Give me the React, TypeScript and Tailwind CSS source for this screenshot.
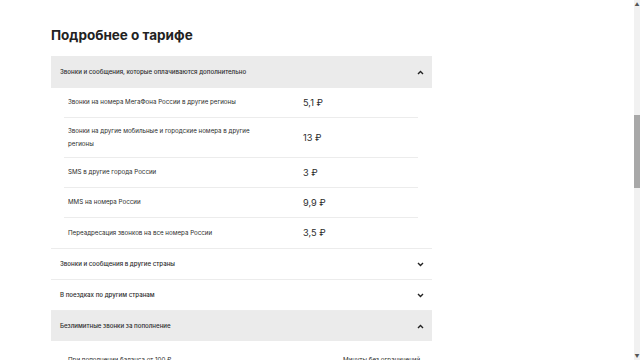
import type { ReactNode } from "react";

const FONT = { fontFamily: "Inter, 'Noto Sans', sans-serif" };

const EXTRA: { label: string; price: string }[] = [
  { label: "Звонки на номера МегаФона России в другие регионы", price: "5,1 ₽" },
  { label: "Звонки на другие мобильные и городские номера в другие регионы", price: "13 ₽" },
  { label: "SMS в другие города России", price: "3 ₽" },
  { label: "MMS на номера России", price: "9,9 ₽" },
  { label: "Переадресация звонков на все номера России", price: "3,5 ₽" },
];

function Chevron({ up }: { up?: boolean }) {
  return (
    <svg width="7" height="5" viewBox="0 0 7 5" className="shrink-0">
      <path
        d={up ? "M1 4 L3.5 1.5 L6 4" : "M1 1 L3.5 3.5 L6 1"}
        fill="none"
        stroke="#222"
        strokeWidth="1.4"
      />
    </svg>
  );
}

function Header({
  title,
  open,
  tall,
  children,
}: {
  title: string;
  open?: boolean;
  tall?: boolean;
  children?: ReactNode;
}) {
  return (
    <div className="border-b border-[#ececec]">
      <div
        className={`flex items-center justify-between pl-[9px] pr-[8px] ${tall ? "h-[32px]" : "h-[30px]"} ${
          open ? "bg-[#ebebeb]" : "bg-white"
        }`}
      >
        <span className="text-[6.15px] font-medium text-[#2b2b2b]">{title}</span>
        <Chevron up={open} />
      </div>
      {children}
    </div>
  );
}

function Row({ label, price, last }: { label: string; price: string; last?: boolean }) {
  return (
    <div
      className={`grid min-h-[30px] grid-cols-[235px_1fr] items-center px-1 py-[7px] ${
        last ? "" : "border-b border-[#ececec]"
      }`}
    >
      <span className="max-w-[196px] text-[6.2px] leading-[12.5px] text-[#2b2b2b]">{label}</span>
      <span className="text-[9.2px] text-[#2b2b2b]">{price}</span>
    </div>
  );
}

export default function App() {
  return (
    <div className="flex h-[360px] w-full overflow-hidden bg-white" style={FONT}>
      <main className="flex-1 pl-[51px] pt-[25px]">
        <h1 className="text-[13.5px] font-bold leading-[20px] text-[#222]">Подробнее о тарифе</h1>
        <div className="mt-[11px] w-[381px]">
          <Header title="Звонки и сообщения, которые оплачиваются дополнительно" open tall>
            <div className="mx-[13px] pr-[1px]">
              {EXTRA.map((r, i) => (
                <Row key={r.label} label={r.label} price={r.price} last={i === EXTRA.length - 1} />
              ))}
            </div>
          </Header>
          <Header title="Звонки и сообщения в другие страны" />
          <Header title="В поездках по другим странам" />
          <Header title="Безлимитные звонки за пополнение" open>
            <div className="mx-[13px] grid grid-cols-[275px_1fr] px-1 pt-[13px]">
              <span className="text-[6.2px] leading-[12px] text-[#2b2b2b]">
                При пополнении баланса от 100 ₽
              </span>
              <span className="whitespace-nowrap text-[6.2px] leading-[12px] text-[#2b2b2b]">
                Минуты без ограничений
              </span>
            </div>
          </Header>
        </div>
      </main>
      <div className="flex w-[6px] flex-col bg-[#f1f1f1]">
        <div className="flex h-[8px] items-center justify-center text-[5px] leading-none text-[#555]">▲</div>
        <div className="h-[107px]" />
        <div className="h-[73px] bg-[#a8a8a8]" />
        <div className="flex-1" />
        <div className="flex h-[8px] items-center justify-center text-[5px] leading-none text-[#555]">▼</div>
      </div>
    </div>
  );
}
